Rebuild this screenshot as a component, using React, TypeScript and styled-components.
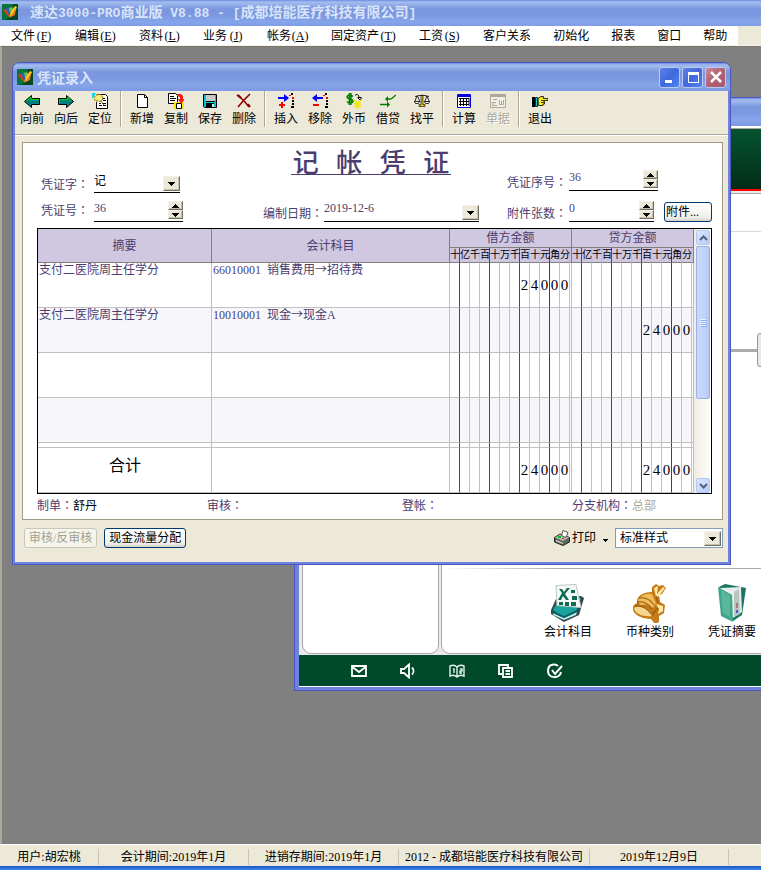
import React from 'react';
import styled, { createGlobalStyle, css } from 'styled-components';

const cjk = '"Liberation Serif", "Noto Sans CJK SC", serif';

const GlobalStyle = createGlobalStyle`
  *, *::before, *::after { box-sizing: border-box; }
  html, body { margin: 0; height: 100%; overflow: hidden; }
  body, button, input, select {
    font-family: ${cjk};
    font-size: 12px;
    line-height: 16px;
    color: #000;
  }
  button, input, select { margin: 0; padding: 0; border: 0; background: none; border-radius: 0; }
`;

const titleGradient = 'linear-gradient(#6f8be0 0, #a3bdf0 2px, #9ab4ea 4px, #7a96df 9px, #7b98e0 15px, #86a5ea 22px, #7f9ce4 26px, #7f9ce4 100%)';

/* ---------- shell ---------- */
const Shell = styled.div`
  display: flex;
  flex-direction: column;
  height: 100vh;
  background: #ece9d8;
`;
const AppTitle = styled.header`
  display: flex;
  align-items: center;
  gap: 12px;
  height: 26px;
  padding: 0 2px 2px;
  background: ${titleGradient};
  color: #d8e4f8;
  flex: none;
`;
const TitleText = styled.h1`
  margin: 0;
  font: bold 14px/20px "Noto Sans CJK SC", sans-serif;
  white-space: pre;
  color: #d8e4f8;
`;
const Fixed = styled.span`
  font-family: "Liberation Mono", monospace;
  font-size: 13px;
`;
const MenuBar = styled.nav`
  display: flex;
  flex: none;
  height: 20px;
  overflow: hidden;
  border-bottom: 1px solid #f5f3ea;
`;
const MenuButton = styled.button`
  padding: 2px 11px 0;
  height: 19px;
  line-height: 17px;
  background: #fff;
  white-space: nowrap;
`;
const Hotkey = styled.span`
  display: inline-block;
  width: 18px;
  text-align: center;
`;
const Workspace = styled.main`
  position: relative;
  flex: 1;
  overflow: hidden;
  background: #808080;
  border-top: 1px solid #77756a;
  border-left: 2px solid #aca899;
`;
const StatusBar = styled.footer`
  display: flex;
  flex: none;
  height: 22px;
  padding-top: 4px;
  border-top: 1px solid #fff;
`;
const StatusPane = styled.div<{ $w: number }>`
  flex: 0 1 ${p => p.$w}px;
  height: 16px;
  border-right: 1px solid #c8c4b0;
  text-align: center;
  white-space: nowrap;
  overflow: hidden;
`;
const Taskbar = styled.div`
  flex: none;
  height: 4px;
  background: linear-gradient(#1c54c4, #3b87ea);
`;

/* ---------- windows ---------- */
const windowFrame = css`
  position: absolute;
  display: flex;
  flex-direction: column;
  border: 2px solid #7083dc;
  border-top: 0;
  border-radius: 7px 7px 0 0;
  box-shadow: 0 0 0 1px #4c56c0;
`;
const BackWindow = styled.section`
  ${windowFrame}
  left: 293px;
  right: -44px;
  top: 51px;
  border-width: 0 4px 3px;
  background: #fff;
`;
const VoucherWindow = styled.section`
  ${windowFrame}
  left: 11px;
  right: 31px;
  top: 16px;
  background: #ece9d8;
`;
const WindowTitle = styled.div`
  display: flex;
  align-items: center;
  gap: 2px;
  height: 28px;
  margin: 0 -2px;
  padding: 0 4px;
  border-radius: 6px 6px 0 0;
  background: ${titleGradient};
`;
const WindowName = styled.h2`
  flex: 1;
  margin: 0;
  padding-left: 2px;
  font: bold 14px/20px "Noto Sans CJK SC", sans-serif;
  color: #d8e4f8;
`;
const CaptionButton = styled.button<{ $close?: boolean }>`
  display: flex;
  align-items: center;
  justify-content: center;
  width: 21px;
  height: 21px;
  border: 1px solid #b9c9f2;
  border-radius: 3px;
  background: ${p => p.$close
    ? 'linear-gradient(135deg, #c98a9b, #b0606f 50%, #a85a72)'
    : 'linear-gradient(135deg, #5d83e6, #4068dc 50%, #4f86f0)'};
`;

/* ---------- background window ---------- */
const Banner = styled.div`
  height: 63px;
  margin-top: 2px;
  background: linear-gradient(#055331, #03341d 80%, #022a17);
  border-top: 1px solid #aca899;
  border-bottom: 2px solid #f00;
`;
const BackBody = styled.div`
  display: flex;
  gap: 2px;
  padding: 2px 0 1px 3px;
  background: #e9e9e9;
`;
const Panel = styled.div<{ $w?: number }>`
  ${p => (p.$w ? `flex: none; width: ${p.$w}px;` : 'flex: 1;')}
  height: 461px;
  background: #fff;
  border: 1px solid #a8a8a8;
  border-radius: 0 0 9px 9px;
`;
const PanelHead = styled.div`
  height: 38px;
  border-bottom: 1px solid #d8d8d8;
`;
const FlowLine = styled.div`
  display: flex;
  align-items: center;
  height: 34px;
  margin-top: 101px;
  padding-right: 3px;
  &::before { content: ''; flex: 1; height: 3px; background: #ababab; }
`;
const FlowNode = styled.div`
  width: 40px;
  height: 34px;
  border: 1px solid #999;
  border-radius: 3px;
  background: #e4eae6;
`;
const Divider = styled.div`
  height: 1px;
  margin: 201px 0 15px;
  background: linear-gradient(90deg, #fff, #aaa 120px);
`;
const Shortcuts = styled.div`
  display: flex;
  padding-left: 85px;
`;
const Shortcut = styled.a`
  flex: none;
  display: flex;
  flex-direction: column;
  align-items: center;
  gap: 1px;
  width: 82px;
  color: #000;
  text-decoration: none;
`;
const GreenBar = styled.div`
  display: flex;
  align-items: center;
  gap: 33px;
  height: 32px;
  padding-left: 52px;
  background: #004a2b;
  border-bottom: 1px solid #fff;
`;
const BarButton = styled.button`
  display: flex;
  width: 16px;
  height: 16px;
`;

/* ---------- toolbar ---------- */
const Toolbar = styled.div`
  display: flex;
  height: 44px;
  border-bottom: 1px solid #aca899;
  box-shadow: 0 1px #fff;
`;
const ToolButton = styled.button`
  display: flex;
  flex-direction: column;
  align-items: center;
  gap: 2px;
  width: 34px;
  padding-top: 2px;
  height: 40px;
  flex: none;
  &:disabled { color: #aca899; text-shadow: 1px 1px #fff; }
`;
const ToolGap = styled.div`
  flex: none;
  width: 8px;
  height: 36px;
  display: flex;
  justify-content: center;
  &::before { content: ''; width: 2px; background: #aca899; border-right: 1px solid #fff; }
`;

/* ---------- voucher ---------- */
const Paper = styled.div`
  margin: 7px 5px 0 7px;
  padding: 0 10px 0 14px;
  background: #fff;
  border: 1px solid #a09a86;
  color: #4b3d6e;
`;
const HeadGrid = styled.div`
  display: grid;
  grid-template-columns: 1fr 216px 205px;
  grid-template-rows: 50px 29px;
  column-gap: 28px;
  padding-bottom: 6px;
`;
const VoucherTitle = styled.h2`
  justify-self: center;
  align-self: start;
  margin: 4px 0 0;
  height: 28px;
  font: 500 26px/28px "Noto Sans CJK SC", sans-serif;
  white-space: pre;
  border-bottom: 1px solid #4b3d6e;
  padding: 0 2px;
`;
const HeadCell = styled.div<{ $lift?: boolean }>`
  display: flex;
  align-items: flex-end;
  padding-bottom: ${p => (p.$lift ? 2 : 0)}px;
`;
const Label = styled.label<{ $w: number; $raised?: boolean }>`
  flex: none;
  width: ${p => p.$w}px;
  padding-left: ${p => (p.$w < 60 ? 4 : 0)}px;
  padding-bottom: ${p => (p.$raised ? 3 : 0)}px;
  white-space: nowrap;
`;
const Colon = styled.span`
  font-family: "Noto Sans CJK TC", sans-serif;
  line-height: 1;
`;
const Field = styled.div<{ $w: number }>`
  display: flex;
  align-items: flex-start;
  width: ${p => p.$w}px;
  height: 21px;
  border-bottom: 1px solid #000;
`;
const FieldInput = styled.input`
  flex: 1;
  min-width: 0;
  height: 14px;
  line-height: 14px;
  color: #4b3d6e;
  outline: none;
`;
const FieldSelect = styled.select`
  flex: 1;
  min-width: 0;
  height: 18px;
  appearance: none;
  outline: none;
`;
const raised = css`
  display: flex;
  align-items: center;
  justify-content: center;
  background: #ece9d8;
  border: 1px solid;
  border-color: #f4f2e8 #716f64 #716f64 #f4f2e8;
  box-shadow: inset -1px -1px #c4c0ac;
`;
const DropButton = styled.button`
  ${raised}
  flex: none;
  width: 17px;
  height: 15px;
  align-self: flex-end;
  margin-bottom: 1px;
`;
const Spinner = styled.div`
  flex: none;
  width: 15px;
  display: grid;
  grid-template-rows: 9px 9px;
`;
const SpinButton = styled.button`${raised}`;
const XpButton = styled.button`
  height: 20px;
  padding: 0 4px;
  line-height: 17px;
  white-space: nowrap;
  border: 1px solid #003c74;
  border-radius: 3px;
  background: linear-gradient(#fff, #f0f0ea 80%, #d6d0c5);
  &:disabled { color: #a1a192; border-color: #c9c7ba; background: #f5f4ea; }
`;
const AttachButton = styled(XpButton)`
  margin-left: auto;
  width: 48px;
  text-align: left;
  padding: 0 1px;
`;

const Ledger = styled.div`
  display: flex;
  border: 1px solid #000;
`;
const LedgerTable = styled.table`
  flex: 1;
  width: 100%;
  min-width: 0;
  table-layout: fixed;
  border-collapse: separate;
  border-spacing: 0;
`;
const Th = styled.th`
  padding: 0;
  height: 19px;
  line-height: 16px;
  font-weight: normal;
  background: #d0c8e0;
  border-right: 1px solid #808080;
  border-bottom: 1px solid #808080;
`;
const lineColor = { grey: '#c0c0c0', green: '#008000', red: '#e00000', none: '#808080' };
type Line = keyof typeof lineColor;
const UnitTh = styled.th<{ $line: Line }>`
  padding: 0;
  height: 15px;
  font-size: 10px;
  line-height: 14px;
  font-weight: normal;
  color: #000;
  background: #d0c8e0;
  border-right: 1px solid ${p => lineColor[p.$line]};
  border-bottom: 1px solid #808080;
  white-space: nowrap;
`;
const Tr = styled.tr<{ $h: number; $alt?: boolean }>`
  height: ${p => p.$h}px;
  background: ${p => (p.$alt ? '#f7f7fb' : '#fff')};
`;
const Td = styled.td`
  padding: 0 0 0 1px;
  vertical-align: top;
  line-height: 15px;
  border-right: 1px solid #c0c0c0;
  border-bottom: 1px solid #c0c0c0;
  white-space: pre;
`;
const Arrow = styled.span`
  font-family: "Noto Sans CJK SC", sans-serif;
  line-height: 1;
`;
const TotalTd = styled(Td)`
  text-align: center;
  vertical-align: middle;
  font-size: 16px;
  line-height: 24px;
  padding-bottom: 8px;
  color: #000;
`;
const DigitTd = styled.td<{ $line: Line }>`
  padding: 0;
  text-align: center;
  vertical-align: middle;
  font-size: 15px;
  line-height: 16px;
  color: #000;
  border-right: 1px solid ${p => lineColor[p.$line]};
  border-bottom: 1px solid #c0c0c0;
`;

const ScrollTrack = styled.div`
  flex: none;
  display: flex;
  flex-direction: column;
  gap: 1px;
  width: 17px;
  padding: 1px 1px 0 2px;
  background: linear-gradient(90deg, #f0ede4, #fefefb);
`;
const ScrollButton = styled.button`
  display: flex;
  align-items: center;
  justify-content: center;
  height: 15px;
  border: 1px solid #b4c8f6;
  border-radius: 2px;
  background: linear-gradient(135deg, #dbe6fe, #b9cdfa);
`;
const ScrollThumb = styled.div`
  display: flex;
  align-items: center;
  justify-content: center;
  height: 153px;
  margin-bottom: auto;
  border: 1px solid #98b1e4;
  border-radius: 2px;
  background: linear-gradient(90deg, #c9d8fc, #c2d3fc 60%, #b5c8f6);
`;
const SignRow = styled.div`
  display: grid;
  grid-template-columns: 170fr 195fr 170fr 140fr;
  height: 25px;
  padding-top: 4px;
`;
const Signed = styled.span<{ $muted?: boolean }>`
  color: ${p => (p.$muted ? '#aca899' : '#000')};
`;
const ActionRow = styled.div`
  display: flex;
  align-items: center;
  gap: 7px;
  padding: 8px 5px 14px 9px;
`;
const PrintButton = styled.button`
  display: flex;
  align-items: center;
  gap: 2px;
  margin-left: auto;
`;
const StyleBox = styled.div`
  display: flex;
  align-items: center;
  width: 108px;
  height: 20px;
  padding: 0 1px 0 4px;
  background: #fff;
  border: 1px solid #7f9db9;
`;

/* ---------- drawings ---------- */
const Svg = ({ s = 16, h, vb = '0 0 16 16', crisp = false, children }: { s?: number; h?: number; vb?: string; crisp?: boolean; children: React.ReactNode }) => (
  <svg width={s} height={h ?? s} viewBox={vb} fill="none" aria-hidden="true" shapeRendering={crisp ? 'crispEdges' : undefined}>{children}</svg>
);
const Logo = () => (
  <Svg>
    <path fill="#08743c" d="M0 0h16v16H0z" />
    <path fill="#024823" d="M11 0h5v16H3l7-4z" />
    <path fill="#e23c20" d="M1 6l3-1 4 8-2-1z" />
    <path fill="#2864c8" d="M4 5l3-2 2 3v7z" />
    <path fill="#70c050" d="M7 4l3-1 1 3-2 6z" />
    <path fill="#ffc820" d="M13 2l2 1-3 7-5 3 3-7z" />
    <path fill="#f07818" d="M14 4l-1 7-6 3 4-5z" />
  </Svg>
);
const Tri = ({ up = false }: { up?: boolean }) => (
  <Svg s={7} h={4} vb="0 0 7 4" crisp><path fill="#000" d={up ? 'M3 0h1v1h1v1h1v1h1v1H0V3h1V2h1V1h1z' : 'M0 0h7v1H6v1H5v1H4v1H3V3H2V2H1V1H0z'} /></Svg>
);
const Chevron = ({ up = false }: { up?: boolean }) => (
  <Svg s={9} h={6} vb="0 0 9 6"><path stroke="#4d6185" strokeWidth="2" d={up ? 'M1 5l3.500-3.500L8 5' : 'M1 1l3.500 3.500L8 1'} /></Svg>
);

const rowMarks = (
  <>
    <path stroke="#000" strokeWidth="2" d="M13 1h2M14 8h2M14 11h2M13 14h3" />
    <path fill="#f00" d="M14 4h2v2h-2zM11 2h2v1h-2z" />
  </>
);
const toolIcons: Record<string, React.ReactNode> = {
  向前: <><path fill="#008080" stroke="#000" d="M.5 8.500L7.500 2.500V5.500H15.500V11.500H7.500V14.500z" /><path stroke="#00e000" d="M2 8.500l5-4.500v2.500h8" /></>,
  向后: <><path fill="#008080" stroke="#000" d="M15.500 8.500L8.500 2.500V5.500H.5V11.500H8.500V14.500z" /><path stroke="#00e000" d="M1.500 10.500v-4h8V4l4 4" /></>,
  定位: <>
    <path fill="#fff" stroke="#000" d="M6.500 1.500h7l2 2v12h-11V9" />
    <path stroke="#000" d="M10 5.500h3M11 7.500h3M7 10.500h2M10 10.500h4M7 12.500h3M11 12.500h3" />
    <path fill="#00d8f0" d="M0 0h4L1 5H0z" />
    <path fill="#f4e868" stroke="#806000" strokeDasharray="2 1" d="M5 1.500h4l2 3-1 3-2 1-5-1-1-3z" />
    <path stroke="#fff" d="M5 3l4 4" /><path stroke="#806000" d="M9 8l3 4" />
  </>,
  新增: <><path fill="#fff" stroke="#000" d="M3.500 1.500h7l3 3v10h-10z" /><path stroke="#000" d="M10.500 1.500v3h3" /></>,
  复制: <>
    <path fill="#fff" stroke="#000" d="M.5.5h7l2 2v8h-9z" /><path stroke="#000" d="M2 3.500h4M2 5.500h6M2 7.500h5" />
    <path fill="#ffe800" d="M6 9h10v7H6z" /><path fill="#fff" stroke="#000" d="M8.500 10.500h5v5h-5z" />
    <path fill="#f02010" d="M9 1h4l2 2v3h2l-4 5-3-5h2V4L9 3z" />
  </>,
  保存: <><path fill="#00c8d0" stroke="#000" d="M1.500 1.500h13v13h-12l-1-1z" /><path fill="#c8c8c8" d="M4 2h9v6H4z" /><path fill="#000" d="M4 8h9v1H4zM4 10h8v4H4z" /><path fill="#e0e0e0" d="M10 11h2v3h-2z" /></>,
  删除: <><path stroke="#900000" strokeWidth="1.600" d="M1 2l4 3 4 4 4 5M14 1l-6 6-6 7" /><path stroke="#900000" strokeWidth="2" d="M2 2l3 3M12 11l2 3" /></>,
  插入: <><path fill="#00f" d="M0 4h6V1l5 4-5 4V6H0z" /><path stroke="#f00" strokeWidth="2" d="M1 12h6M4 9v6" />{rowMarks}</>,
  移除: <><path fill="#00f" d="M11 4H5V1L0 5l5 4V6h6z" /><path stroke="#f00" strokeWidth="2" d="M1 12h6" />{rowMarks}</>,
  外币: <>
    <path stroke="#008000" strokeWidth="1.500" d="M7 3.500C6 2 1 1.500 1 4s6 1.500 6 4-5 2.500-6 .5M3.300 0v12M5 0v12" />
    <path stroke="#000" d="M9 2.500c2-2 4-1 4 2.500M11.500 4.500h4M12 5l2 2 1.500-2" />
    <path stroke="#f4e400" strokeWidth="1.600" d="M8 7l3.500 3.500L15 7M11.500 10v6M8 11h7M8 13.500h7" />
  </>,
  借贷: <>
    <path stroke="#008000" strokeWidth="1.300" d="M16 2c-2 1-3 3-5 4H6M0 11.500h9" />
    <path fill="#008000" d="M5 6l3-3v6zM10 11.500L7 8.500v6z" />
  </>,
  找平: <>
    <path stroke="#000" strokeWidth=".8" d="M8 1.500v10M1 3.500l4-1 6 0 4 1M3 3l-2.500 6M3.500 3L6 9M13 3l-2.500 6M13 3l2.500 6" />
    <path fill="#d4c020" stroke="#000" strokeWidth=".6" d="M7 2.500h2v9h2v2H5v-2h2z" />
    <path fill="#fff" stroke="#000" strokeWidth=".8" d="M.5 8.500h5l-1 2h-3zM10.500 8.500h5l-1 2h-3z" />
  </>,
  计算: <><path fill="#fff" stroke="#0000d8" d="M1.500 1.500h13v13h-13z" /><path fill="#0000d8" d="M2 2h12v2H2z" /><path stroke="#000" d="M3 5.500h10M3 8.500h10M3 11.500h10M4.500 5v8M7.500 5v8M10.500 5v8M13 5v8" /></>,
  单据: <><path fill="#f1efe3" stroke="#aca899" d="M.5 1.500h15v13H.5z" /><path stroke="#aca899" d="M3 6.500h4M2 9.500h4M2 12.500h5M3 9v3M9.500 7v4.500h4V7M11.500 8v4" /><path stroke="#aca899" strokeWidth="2" d="M1 3h14" /></>,
  退出: <>
    <path fill="#000" d="M0 4h3v10H0z" /><path fill="#00d0e0" stroke="#000" strokeWidth=".8" d="M3.500 4.500h2v9h-2z" />
    <path fill="#ffec20" stroke="#000" strokeWidth=".8" d="M6 5.500l3-2h2.500v2H16v2h-4v1.500h.5V11H11v1.500H6.500z" /><path stroke="#000" strokeWidth=".7" d="M9 7.500h3M9 9.500h3" />
  </>,
};

const shortcutIcons: Record<string, React.ReactNode> = {
  会计科目: <>
    <path fill="#33474b" d="M1 26L6 15l25-3 3 2-5 17-15 7L1 30z" />
    <path fill="#1aa39c" d="M3 26l5-9 23-3-5 14-13 6z" />
    <path fill="#b8ebe4" d="M3 29l11 5 13-6-1 3-12 5L3 31z" />
    <path fill="#086064" d="M1 26l13 6 15-7v2l-15 7L1 28z" />
    <path fill="#f4f8f7" stroke="#b8c8c8" d="M6 1.500l20-1 5 23-24-2z" />
    <path fill="#0e6b50" d="M9 5h3l2 3 3-4h3l-5 6 4 6h-3l-3-4-2 4H8l4-7zM21 6h4v3h-4zM22 12h5v4h-5zM9 18h4v3H9zM15 18h4v4h-4zM21 18h5v4h-5z" />
  </>,
  币种类别: <>
    <path fill="#c47a16" d="M1 25c0-4 2-5 4-6-1-6 5-11 15-11V3l4-3 3 2 4-1 3 3-4 6-3 1 1 7 5 3-1 8-5 3v6l-4 2-4-5C11 35 1 31 1 25z" />
    <path fill="#eebb58" d="M6 16c3-5 8-7 14-6l4 9-3 5c-4-4-8-4-13-3z" />
    <path fill="#f6d58c" d="M2 24c5-3 10-2 16 3l2 5C11 33 3 30 2 24z" />
    <path fill="#ffe8a8" d="M22 4l4-2-1 8 6-7 2 1-6 8-3 1zM24 20l7 2v5l-5 3 1-5z" />
    <path stroke="#9a5a0c" strokeWidth="1.200" d="M5 18c6-1 11 1 15 7M3 22c7-1 13 3 16 8M7 14c6-1 11 1 15 7M20 32c1-5 4-5 6-8M24 12l2 7" />
  </>,
  凭证摘要: <>
    <path fill="#187460" d="M5 3l6-3 21 4-4 27-9 6z" />
    <path fill="#e6edea" d="M6 4l21-1 1 25-9 6z" />
    <path fill="#b8c6c0" d="M20 8l5-3 1 25-6 3z" />
    <path fill="#3fa58b" d="M4 3l3 29 12 6-1-27z" />
    <path fill="#78c8b0" d="M7 6l9 6v21l-7-4z" opacity=".5" />
    <path stroke="#9c3040" d="M23 19v5" /><path stroke="#4858d0" strokeWidth="2" d="M23 26v3" />
  </>,
};

const barIcons: [string, React.ReactNode][] = [
  ['邮件', <path stroke="#fff" strokeWidth="1.800" d="M1 3h14v10H1zM1.500 4L8 9l6.500-5" />],
  ['声音', <path stroke="#fff" strokeWidth="1.800" d="M1 6h3l5-4.500v13L4 10H1zM12 4.500c2 2 2 5 0 7" />],
  ['账簿', <path stroke="#e6f0ea" strokeWidth="1.400" d="M8 4C6 2 3 2 1 3v10c2-1 5-1 7 1 2-2 5-2 7-1V3c-2-1-5-1-7 1zv9M4 6h1v4M11 6h2v2h-2v2h2" />],
  ['复制', <path stroke="#fff" strokeWidth="1.800" d="M4 11H1V2h9v2M5 5h9v9H5zM7.500 8h4.500M7.500 11h4.500" />],
  ['完成', <path stroke="#fff" strokeWidth="2" d="M14 9c-1 7-13 7-13-1s8-7 10-5M5 7l3 4 7-8" />],
];

/* ---------- data ---------- */
const menus: [string, string?][] = [
  ['文件', 'F'], ['编辑', 'E'], ['资料', 'L'], ['业务', 'J'], ['帐务', 'A'], ['固定资产', 'T'],
  ['工资', 'S'], ['客户关系'], ['初始化'], ['报表'], ['窗口'], ['帮助'],
];
const toolGroups = [
  ['向前', '向后', '定位'],
  ['新增', '复制', '保存', '删除'],
  ['插入', '移除', '外币', '借贷', '找平'],
  ['计算', '单据'],
  ['退出'],
];
const units = [...'十亿千百十万千百十元角分'];
const unitLine = (i: number): Line => (i === 9 ? 'red' : i === 0 || i === 3 || i === 6 ? 'green' : 'grey');
const entries = [
  { memo: '支付二医院周主任学分', account: ['66010001  销售费用', '招待费'], debit: '24000', credit: '' },
  { memo: '支付二医院周主任学分', account: ['10010001  现金', '现金A'], debit: '', credit: '24000' },
  { memo: '', account: [], debit: '', credit: '' },
  { memo: '', account: [], debit: '', credit: '' },
];
const panes: [string, number][] = [
  ['用户:胡宏桃', 99], ['会计期间:2019年1月', 150], ['进销存期间:2019年1月', 150],
  ['2012 - 成都培能医疗科技有限公司', 191], ['2019年12月9日', 139],
];

const AmountCells = ({ value }: { value: string }) => {
  const digits = value.padStart(12);
  return (
    <>
      {units.map((_, i) => <DigitTd key={i} $line={unitLine(i)}>{digits[i].trim()}</DigitTd>)}
      <DigitTd $line="grey" />
    </>
  );
};

const UnitHeads = () => (
  <>
    {units.map((u, i) => <UnitTh key={i} $line={unitLine(i)}>{u}</UnitTh>)}
    <UnitTh $line="none" />
  </>
);

const FieldLabel = ({ id, w, raised: up, children }: { id: string; w: number; raised?: boolean; children: string }) => (
  <Label htmlFor={id} $w={w} $raised={up}>{children}<Colon>：</Colon></Label>
);

const NumberField = ({ id, w, value }: { id: string; w: number; value: string }) => (
  <Field $w={w}>
    <FieldInput id={id} defaultValue={value} />
    <Spinner>
      <SpinButton aria-label="增加"><Tri up /></SpinButton>
      <SpinButton aria-label="减少"><Tri /></SpinButton>
    </Spinner>
  </Field>
);

const VoucherTable = () => (
  <Ledger>
    <LedgerTable>
      <colgroup>
        <col width={174} />
        <col />
        {[0, 1].map(k => (
          <React.Fragment key={k}>
            {units.map((_, i) => <col key={i} width={10} />)}
            <col width={2} />
          </React.Fragment>
        ))}
      </colgroup>
      <thead>
        <tr>
          <Th rowSpan={2}>摘要</Th>
          <Th rowSpan={2}>会计科目</Th>
          <Th colSpan={13}>借方金额</Th>
          <Th colSpan={13}>贷方金额</Th>
        </tr>
        <tr><UnitHeads /><UnitHeads /></tr>
      </thead>
      <tbody>
        {entries.map((e, i) => (
          <Tr key={i} $h={45} $alt={i % 2 === 1}>
            <Td>{e.memo}</Td>
            <Td>{e.account.map((part, k) => <React.Fragment key={k}>{k > 0 && <Arrow>→</Arrow>}{part}</React.Fragment>)}</Td>
            <AmountCells value={e.debit} />
            <AmountCells value={e.credit} />
          </Tr>
        ))}
        <Tr $h={5}>
          <Td /><Td /><AmountCells value="" /><AmountCells value="" />
        </Tr>
        <Tr $h={45}>
          <TotalTd>合计</TotalTd>
          <Td />
          <AmountCells value="24000" />
          <AmountCells value="24000" />
        </Tr>
      </tbody>
    </LedgerTable>
    <ScrollTrack>
      <ScrollButton aria-label="向上滚动"><Chevron up /></ScrollButton>
      <ScrollThumb>
        <Svg s={7} h={8} vb="0 0 7 8" crisp><path stroke="#eef4fe" d="M0 .5h6M0 2.500h6M0 4.500h6M0 6.500h6" /><path stroke="#8cb0f8" d="M1 1.500h6M1 3.500h6M1 5.500h6M1 7.500h6" /></Svg>
      </ScrollThumb>
      <ScrollButton aria-label="向下滚动"><Chevron /></ScrollButton>
    </ScrollTrack>
  </Ledger>
);

export default function App() {
  return (
    <Shell>
      <GlobalStyle />
      <AppTitle>
        <Logo />
        <TitleText>速达<Fixed>3000-PRO</Fixed>商业版<Fixed> V8.88 - [</Fixed>成都培能医疗科技有限公司<Fixed>]</Fixed></TitleText>
      </AppTitle>
      <MenuBar>
        {menus.map(([name, key]) => (
          <MenuButton key={name}>{name}{key && <Hotkey>(<u>{key}</u>)</Hotkey>}</MenuButton>
        ))}
      </MenuBar>
      <Workspace>
        <BackWindow>
          <WindowTitle />
          <Banner />
          <BackBody>
            <Panel $w={137} />
            <Panel>
              <PanelHead />
              <FlowLine><FlowNode /></FlowLine>
              <Divider />
              <Shortcuts>
                {Object.entries(shortcutIcons).map(([name, icon]) => (
                  <Shortcut key={name} href="#"><Svg s={36} h={39} vb="0 0 36 39">{icon}</Svg>{name}</Shortcut>
                ))}
              </Shortcuts>
            </Panel>
          </BackBody>
          <GreenBar>
            {barIcons.map(([name, icon]) => <BarButton key={name} aria-label={name}><Svg>{icon}</Svg></BarButton>)}
          </GreenBar>
        </BackWindow>

        <VoucherWindow>
          <WindowTitle>
            <Logo />
            <WindowName>凭证录入</WindowName>
            <CaptionButton aria-label="最小化"><Svg s={18} vb="0 0 18 18" crisp><path fill="#fff" d="M4 12h7v3H4z" /></Svg></CaptionButton>
            <CaptionButton aria-label="最大化"><Svg s={18} vb="0 0 18 18" crisp><path fill="#fff" d="M4 4h11v11H4zM5 7v7h9V7z" fillRule="evenodd" /></Svg></CaptionButton>
            <CaptionButton aria-label="关闭" $close><Svg s={18} vb="0 0 18 18"><path stroke="#fff" strokeWidth="2.500" d="M4 4l10 10M14 4L4 14" /></Svg></CaptionButton>
          </WindowTitle>
          <Toolbar>
            {toolGroups.map((group, g) => (
              <React.Fragment key={g}>
                {g > 0 && <ToolGap />}
                {group.map(name => (
                  <ToolButton key={name} disabled={name === '单据'}><Svg>{toolIcons[name]}</Svg>{name}</ToolButton>
                ))}
              </React.Fragment>
            ))}
          </Toolbar>
          <Paper>
            <HeadGrid>
              <HeadCell>
                <FieldLabel id="word" w={57}>凭证字</FieldLabel>
                <Field $w={86}>
                  <FieldSelect id="word"><option>记</option></FieldSelect>
                  <DropButton aria-label="展开凭证字"><Tri /></DropButton>
                </Field>
              </HeadCell>
              <VoucherTitle>记   帐   凭   证</VoucherTitle>
              <HeadCell $lift>
                <FieldLabel id="serial" w={62}>凭证序号</FieldLabel>
                <NumberField id="serial" w={89} value="36" />
              </HeadCell>
              <HeadCell>
                <FieldLabel id="number" w={57} raised>凭证号</FieldLabel>
                <NumberField id="number" w={89} value="36" />
              </HeadCell>
              <HeadCell>
                <FieldLabel id="date" w={61}>编制日期</FieldLabel>
                <Field $w={155}>
                  <FieldInput id="date" defaultValue="2019-12-6" />
                  <DropButton aria-label="选择日期"><Tri /></DropButton>
                </Field>
              </HeadCell>
              <HeadCell>
                <FieldLabel id="count" w={62}>附件张数</FieldLabel>
                <NumberField id="count" w={85} value="0" />
                <AttachButton>附件...</AttachButton>
              </HeadCell>
            </HeadGrid>
            <VoucherTable />
            <SignRow>
              <div>制单<Colon>：</Colon><Signed>舒丹</Signed></div>
              <div>审核<Colon>：</Colon></div>
              <div>登帐<Colon>：</Colon></div>
              <div>分支机构<Colon>：</Colon><Signed $muted>总部</Signed></div>
            </SignRow>
          </Paper>
          <ActionRow>
            <XpButton disabled>审核/反审核</XpButton>
            <XpButton>现金流量分配</XpButton>
            <PrintButton>
              <Svg>
                <path fill="#60645c" stroke="#202420" d="M.5 7.500L6 4l9.500 3.500v4.500L9 15.500.5 12z" />
                <path fill="#b8bcae" d="M1 7.500l5-3 9 3-6 3.500z" />
                <path fill="#fff" stroke="#555" d="M7.500 5.500L9 .5l5 2-2 5z" />
                <path fill="#d8dcd0" d="M2 10l7 3v1l-7-2.500z" /><path fill="#00c030" d="M4 6h3v2H4z" /><path fill="#e02020" d="M8 8h2v1H8z" />
              </Svg>
              打印
            </PrintButton>
            <button aria-label="打印选项"><Svg s={5} h={3} vb="0 0 5 3" crisp><path fill="#000" d="M0 0h5v1H4v1H3v1H2V2H1V1H0z" /></Svg></button>
            <StyleBox>
              <FieldSelect aria-label="打印样式"><option>标准样式</option></FieldSelect>
              <DropButton aria-label="展开打印样式"><Tri /></DropButton>
            </StyleBox>
          </ActionRow>
        </VoucherWindow>
      </Workspace>
      <StatusBar>
        {panes.map(([text, w]) => <StatusPane key={text} $w={w}>{text}</StatusPane>)}
      </StatusBar>
      <Taskbar />
    </Shell>
  );
}
